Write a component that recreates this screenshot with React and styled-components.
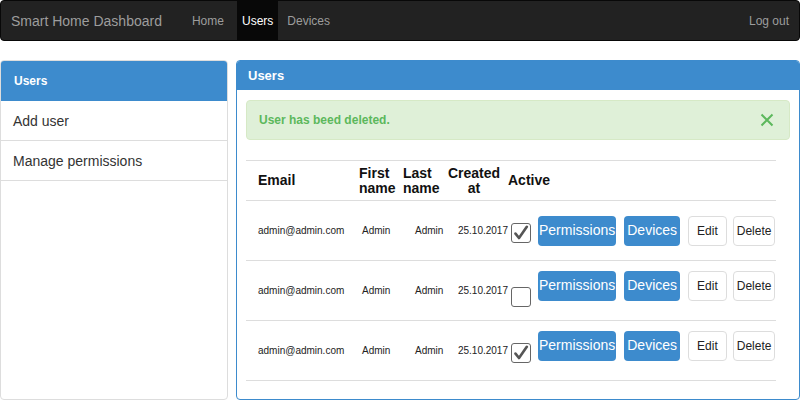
import React from "react";
import styled, { createGlobalStyle } from "styled-components";

const Global = createGlobalStyle`
  html, body { margin: 0; padding: 0; background: #fff; }
  body { font-family: "Liberation Sans", Arial, sans-serif; color: #222; }
  * { box-sizing: border-box; }
`;

const BLUE = "#3d8bcd";

const Page = styled.div`
  width: 801px;
  height: 401px;
  padding-right: 1px;
  display: flex;
  flex-direction: column;
`;

const Navbar = styled.nav`
  height: 41px;
  background: #222;
  border: 1px solid #080808;
  border-radius: 4px;
  display: flex;
  align-items: stretch;
`;

const Brand = styled.div`
  display: flex;
  align-items: center;
  padding-left: 10px;
  margin-right: 25px;
  font-size: 14px;
  color: #9d9d9d;
`;

const NavList = styled.div`
  display: flex;
  align-items: stretch;
  gap: 4px;
  flex: 1;
`;

const NavLink = styled.div`
  display: flex;
  align-items: center;
  padding: 0 5px;
  font-size: 12px;
  color: ${(p) => (p.$active ? "#fff" : "#9d9d9d")};
  background: ${(p) => (p.$active ? "#080808" : "transparent")};
  margin-right: ${(p) => p.$mr || 0}px;
  margin-top: -1px;
  margin-bottom: -1px;
`;

const Logout = styled.div`
  display: flex;
  align-items: center;
  padding-right: 10px;
  font-size: 12px;
  color: #9d9d9d;
`;

const Main = styled.div`
  display: flex;
  gap: 8px;
  margin-top: 19px;
  height: 340px;
`;

const Sidebar = styled.div`
  width: 228px;
  border: 1px solid #ddd;
  border-radius: 4px;
  overflow: hidden;
  display: flex;
  flex-direction: column;
`;

const SideHead = styled.div`
  height: 41px;
  margin: -1px -1px 0;
  background: ${BLUE};
  color: #fff;
  font-size: 12px;
  font-weight: bold;
  display: flex;
  align-items: center;
  padding-left: 14px;
  border-radius: 4px 4px 0 0;
`;

const SideItem = styled.div`
  height: 40px;
  border-bottom: 1px solid #ddd;
  display: flex;
  align-items: center;
  padding-left: 12px;
  font-size: 14px;
  color: #333;
`;

const Panel = styled.div`
  flex: 1;
  border: 1px solid ${BLUE};
  border-radius: 4px;
  overflow: hidden;
  display: flex;
  flex-direction: column;
`;

const PanelHead = styled.div`
  height: 29px;
  background: ${BLUE};
  color: #fff;
  font-size: 13px;
  font-weight: bold;
  display: flex;
  align-items: center;
  padding-left: 11px;
  padding-bottom: 1px;
`;

const PanelBody = styled.div`
  padding: 10px 9px 0;
`;

const Alert = styled.div`
  height: 40px;
  background: #dff0d8;
  border: 1px solid #d6e9c6;
  border-radius: 4px;
  display: flex;
  align-items: center;
  justify-content: space-between;
  padding: 0 15px 0 12px;
  margin-bottom: 20px;
  color: #5cb85c;
  font-size: 12px;
  font-weight: bold;
`;

const Close = styled.svg`
  width: 14px;
  height: 14px;
  display: block;
`;

const Table = styled.div`
  width: 530px;
`;

const Row = styled.div`
  display: grid;
  grid-template-columns: 110px 44px 46px 62px 27px 1fr;
  align-items: center;
  height: ${(p) => (p.$head ? 41 : 60)}px;
  border-top: ${(p) => (p.$head ? "1px solid #ddd" : "none")};
  border-bottom: 1px solid #ddd;
`;

const HeadCell = styled.div`
  font-size: 14px;
  font-weight: bold;
  line-height: 15px;
  color: #111;
  padding-left: ${(p) => p.$pad || 0}px;
  padding-right: ${(p) => p.$padR || 0}px;
  text-align: ${(p) => p.$align || "left"};
  white-space: ${(p) => (p.$nowrap ? "nowrap" : "normal")};
`;

const Cell = styled.div`
  font-size: 10px;
  color: #222;
  padding-left: ${(p) => p.$pad || 0}px;
  text-align: ${(p) => p.$align || "left"};
  white-space: nowrap;
`;

const Box = styled.div`
  margin-left: 3px;
  margin-top: ${(p) => (p.$checked ? 4 : 12)}px;
  width: 20px;
  height: 20px;
  border: 1px solid #666;
  border-radius: 3px;
  background: #fff;
  display: flex;
  align-items: center;
  justify-content: center;
`;

const Actions = styled.div`
  display: flex;
  align-items: center;
  padding-left: 3px;
  margin-top: ${(p) => (p.$lift ? -10 : 0)}px;
`;

const BlueBtn = styled.div`
  height: 30px;
  padding: 0 ${(p) => p.$px}px;
  margin-right: 8px;
  background: ${BLUE};
  color: #fff;
  border-radius: 4px;
  font-size: 14px;
  display: flex;
  align-items: center;
  padding-bottom: 2px;
`;

const PlainBtn = styled.div`
  height: 30px;
  padding: 0 ${(p) => p.$px}px;
  margin-right: ${(p) => p.$mr || 0}px;
  background: #fff;
  color: #222;
  border: 1px solid #ddd;
  border-radius: 4px;
  font-size: 12px;
  display: flex;
  align-items: center;
`;

const Check = () => (
  <svg width="16" height="16" viewBox="0 0 16 16">
    <path d="M2.5 8.6 L6 13 L13.8 1.8" fill="none" stroke="#555" strokeWidth="2.6" strokeLinecap="round" strokeLinejoin="round" />
  </svg>
);

const users = [
  { email: "admin@admin.com", first: "Admin", last: "Admin", date: "25.10.2017", active: true, lift: false },
  { email: "admin@admin.com", first: "Admin", last: "Admin", date: "25.10.2017", active: false, lift: true },
  { email: "admin@admin.com", first: "Admin", last: "Admin", date: "25.10.2017", active: true, lift: true },
];

export default function App() {
  return (
    <>
      <Global />
      <Page>
        <Navbar>
          <Brand>Smart Home Dashboard</Brand>
          <NavList>
            <NavLink $mr={4}>Home</NavLink>
            <NavLink $active>Users</NavLink>
            <NavLink>Devices</NavLink>
          </NavList>
          <Logout>Log out</Logout>
        </Navbar>
        <Main>
          <Sidebar>
            <SideHead>Users</SideHead>
            <SideItem>Add user</SideItem>
            <SideItem>Manage permissions</SideItem>
          </Sidebar>
          <Panel>
            <PanelHead>Users</PanelHead>
            <PanelBody>
              <Alert>
                <span>User has beed deleted.</span>
                <Close viewBox="0 0 14 14">
                  <path d="M1.5 1.5 L12.5 12.5 M12.5 1.5 L1.5 12.5" stroke="#5cb85c" strokeWidth="2" fill="none" />
                </Close>
              </Alert>
              <Table>
                <Row $head>
                  <HeadCell $pad={12}>Email</HeadCell>
                  <HeadCell $pad={3}>First name</HeadCell>
                  <HeadCell $pad={3}>Last name</HeadCell>
                  <HeadCell $align="center" $padR={6}>Created at</HeadCell>
                  <HeadCell $nowrap>Active</HeadCell>
                  <div />
                </Row>
                {users.map((u, i) => (
                  <Row key={i}>
                    <Cell $pad={12}>{u.email}</Cell>
                    <Cell $pad={6}>{u.first}</Cell>
                    <Cell $pad={15}>{u.last}</Cell>
                    <Cell $align="right">{u.date}</Cell>
                    <Box $checked={u.active}>{u.active && <Check />}</Box>
                    <Actions $lift={u.lift}>
                      <BlueBtn $px={1}>Permissions</BlueBtn>
                      <BlueBtn $px={3}>Devices</BlueBtn>
                      <PlainBtn $px={8} $mr={6}>Edit</PlainBtn>
                      <PlainBtn $px={3}>Delete</PlainBtn>
                    </Actions>
                  </Row>
                ))}
              </Table>
            </PanelBody>
          </Panel>
        </Main>
      </Page>
    </>
  );
}
